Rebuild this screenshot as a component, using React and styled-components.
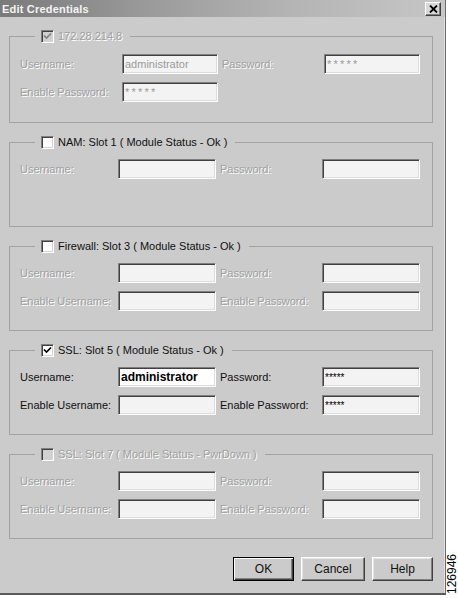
import React from "react";
import styled, { createGlobalStyle } from "styled-components";

const GlobalStyle = createGlobalStyle`
  html, body { margin: 0; padding: 0; background: #fff; }
  body { font-family: "Liberation Sans", Arial, sans-serif; }
  * { box-sizing: border-box; }
`;

const Page = styled.div`
  display: flex;
  width: 458px;
  height: 598px;
  overflow: hidden;
  background: #fff;
`;

const Dialog = styled.div`
  width: 446px;
  align-self: flex-start;
  display: flex;
  flex-direction: column;
  background: #cbcbcb;
  border-right: 1px solid #6a6a6a;
  border-bottom: 2px solid #5a5a5a;
  box-shadow: inset -1px 0 0 #e2e2e2;
`;

const TitleBar = styled.div`
  height: 17px;
  display: flex;
  align-items: center;
  justify-content: space-between;
  padding: 0 4px 0 2px;
  background: linear-gradient(90deg, #7a7a7a 0%, #9c9c9c 35%, #b4b4b4 65%, #c6c6c6 100%);
`;

const Title = styled.span`
  color: #f4f4f4;
  font-weight: bold;
  font-size: 11px;
  letter-spacing: 0.2px;
`;

const CloseButton = styled.div`
  width: 16px;
  height: 14px;
  display: flex;
  align-items: center;
  justify-content: center;
  background: #d8d8d8;
  border: 1px solid;
  border-color: #fff #404040 #404040 #fff;
  box-shadow: inset -1px -1px 0 #808080;
`;

const Body = styled.div`
  display: flex;
  flex-direction: column;
  gap: 12px;
  padding: 12px 12px 12px 9px;
`;

const Group = styled.fieldset`
  margin: 0;
  min-width: 0;
  padding: ${(p) => (p.$first ? "11px 12px 20px 10px" : "10px 12px 19px 10px")};
  border: 1px solid #a2a2a2;
`;

const Legend = styled.legend`
  display: flex;
  align-items: center;
  gap: 4px;
  height: 14px;
  margin-left: 15px;
  padding: 0 8px 0 6px;
  font-size: 11px;
  color: ${(p) => (p.$disabled ? "#a0a0a0" : "#111")};
  text-shadow: ${(p) => (p.$disabled ? "1px 1px 0 #fff" : "none")};
  white-space: nowrap;
`;

const Box = styled.span`
  width: 13px;
  height: 13px;
  display: flex;
  align-items: center;
  justify-content: center;
  background: ${(p) => (p.$disabled ? "#d0d0d0" : "#fff")};
  border: 1px solid;
  border-color: #808080 #fff #fff #808080;
  box-shadow: inset 1px 1px 0 #404040, inset -1px -1px 0 #d4d4d4;
`;

const Grid = styled.div`
  display: grid;
  grid-template-columns: ${(p) => p.$cols};
  grid-template-rows: 20px 20px;
  column-gap: 4px;
  row-gap: 8px;
  align-items: center;
`;

const Label = styled.span`
  font-size: 11px;
  color: ${(p) => (p.$disabled ? "#a0a0a0" : "#111")};
  text-shadow: ${(p) => (p.$disabled ? "1px 1px 0 #fff" : "none")};
  white-space: nowrap;
`;

const Field = styled.input`
  width: 100%;
  height: 20px;
  margin: 0;
  padding: 0 2px;
  border: 1px solid;
  border-color: #808080 #fff #fff #808080;
  box-shadow: inset 1px 1px 0 #404040, inset -1px -1px 0 #dcdcdc;
  background: ${(p) => (p.$white ? "#fff" : "#f3f3f3")};
  font-family: "Liberation Sans", Arial, sans-serif;
  font-size: ${(p) => (p.$bold ? "12px" : p.$small ? "10px" : "11px")};
  font-weight: ${(p) => (p.$bold ? "bold" : "normal")};
  letter-spacing: ${(p) => (p.$spaced ? "2.2px" : "0")};
  color: ${(p) => (p.$disabled ? "#9a9a9a" : "#000")};
  outline: none;
`;

const ButtonRow = styled.div`
  display: flex;
  justify-content: flex-end;
  gap: 7px;
  margin-top: 6px;
`;

const Button = styled.button`
  width: ${(p) => p.$w}px;
  height: 24px;
  margin: 0;
  padding: 0;
  background: #cbcbcb;
  font-family: "Liberation Sans", Arial, sans-serif;
  font-size: 12px;
  color: #111;
  border: 1px solid;
  border-color: ${(p) => (p.$default ? "#000" : "#fff #404040 #404040 #fff")};
  box-shadow: ${(p) =>
    p.$default
      ? "inset 1px 1px 0 #fff, inset -1px -1px 0 #404040, inset -2px -2px 0 #808080"
      : "inset -1px -1px 0 #808080, inset 1px 1px 0 #e4e4e4"};
`;

const SideStrip = styled.div`
  flex: 1;
  display: flex;
  align-items: flex-end;
  justify-content: center;
  padding-bottom: 4px;
`;

const FigureNo = styled.span`
  writing-mode: vertical-rl;
  transform: rotate(180deg);
  font-size: 12px;
  line-height: 1;
  color: #000;
`;

const Check = ({ color }) => (
  <svg width="9" height="9" viewBox="0 0 9 9">
    <path d="M1 3.5 L3.5 6 L8 1.5" fill="none" stroke={color} strokeWidth="1.7" />
  </svg>
);

const CheckBox = ({ checked, disabled }) => (
  <Box $disabled={disabled}>{checked && <Check color={disabled ? "#808080" : "#000"} />}</Box>
);

const groups = [
  {
    title: "172.28.214.8",
    checked: true,
    disabledBox: true,
    disabled: true,
    first: true,
    cols: "98px 96px 98px 96px",
    rows: [
      [
        { label: "Username:", value: "administrator" },
        { label: "Password:", value: "*****", spaced: true },
      ],
      [{ label: "Enable Password:", value: "*****", spaced: true }],
    ],
  },
  {
    title: "NAM: Slot 1 ( Module Status - Ok )",
    checked: false,
    disabled: true,
    cols: "94px 98px 98px 98px",
    rows: [[{ label: "Username:" }, { label: "Password:" }]],
  },
  {
    title: "Firewall: Slot 3 ( Module Status - Ok )",
    checked: false,
    disabled: true,
    cols: "94px 98px 98px 98px",
    rows: [
      [{ label: "Username:" }, { label: "Password:" }],
      [{ label: "Enable Username:" }, { label: "Enable Password:" }],
    ],
  },
  {
    title: "SSL: Slot 5 ( Module Status - Ok )",
    checked: true,
    disabled: false,
    cols: "94px 98px 98px 98px",
    rows: [
      [
        { label: "Username:", value: "administrator", bold: true, white: true },
        { label: "Password:", value: "*****", small: true },
      ],
      [{ label: "Enable Username:" }, { label: "Enable Password:", value: "*****", small: true }],
    ],
  },
  {
    title: "SSL: Slot 7 ( Module Status - PwrDown )",
    checked: false,
    disabledBox: true,
    disabled: true,
    cols: "94px 98px 98px 98px",
    rows: [
      [{ label: "Username:" }, { label: "Password:" }],
      [{ label: "Enable Username:" }, { label: "Enable Password:" }],
    ],
  },
];

const CredentialGroup = ({ g }) => (
  <Group $first={g.first}>
    <Legend $disabled={g.disabledBox}>
      <CheckBox checked={g.checked} disabled={g.disabledBox} />
      <span>{g.title}</span>
    </Legend>
    <Grid $cols={g.cols}>
      {g.rows.map((row) =>
        row.map((f) => (
          <React.Fragment key={f.label}>
            <Label $disabled={g.disabled}>{f.label}</Label>
            <Field
              readOnly
              value={f.value || ""}
              $disabled={g.disabled}
              $bold={f.bold}
              $small={f.small}
              $spaced={f.spaced}
              $white={f.white}
            />
          </React.Fragment>
        ))
      )}
    </Grid>
  </Group>
);

export default function App() {
  return (
    <>
      <GlobalStyle />
      <Page>
        <Dialog>
          <TitleBar>
            <Title>Edit Credentials</Title>
            <CloseButton>
              <svg width="9" height="8" viewBox="0 0 9 8">
                <path d="M1 0.5 L8 7.5 M8 0.5 L1 7.5" stroke="#000" strokeWidth="1.8" />
              </svg>
            </CloseButton>
          </TitleBar>
          <Body>
            {groups.map((g) => (
              <CredentialGroup key={g.title} g={g} />
            ))}
            <ButtonRow>
              <Button $w={61} $default>OK</Button>
              <Button $w={64}>Cancel</Button>
              <Button $w={61}>Help</Button>
            </ButtonRow>
          </Body>
        </Dialog>
        <SideStrip>
          <FigureNo>126946</FigureNo>
        </SideStrip>
      </Page>
    </>
  );
}
